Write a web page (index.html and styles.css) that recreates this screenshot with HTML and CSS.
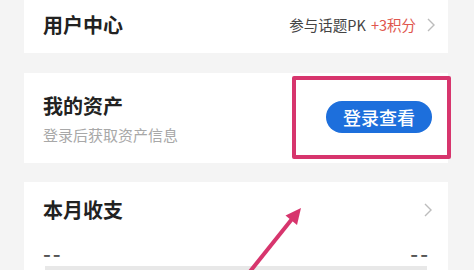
FILE: index.html
```html
<!DOCTYPE html>
<html lang="zh-CN">
<head>
<meta charset="utf-8">
<link rel="stylesheet" href="styles.css">
</head>
<body>
<div class="page">
  <section class="card card-user">
    <h2 class="title">用户中心</h2>
    <div class="extra">
      <span class="extra-text">参与话题PK</span>
      <span class="points">+3积分</span>
      <svg class="chevron" width="8" height="14" viewBox="0 0 8 14"><path d="M1 1l6 6-6 6" fill="none" stroke="#bcbcbc" stroke-width="1.4"/></svg>
    </div>
  </section>

  <section class="card card-assets">
    <div class="assets-text">
      <h2 class="title">我的资产</h2>
      <p class="sub">登录后获取资产信息</p>
    </div>
    <button class="login-btn">登录查看</button>
    <div class="highlight"></div>
  </section>

  <section class="card card-month">
    <div class="month-head">
      <h2 class="title">本月收支</h2>
      <svg class="chevron" width="8" height="14" viewBox="0 0 8 14"><path d="M1 1l6 6-6 6" fill="none" stroke="#bcbcbc" stroke-width="1.4"/></svg>
    </div>
    <div class="month-row">
      <span class="dash">--</span>
      <span class="dash">--</span>
    </div>
    <div class="bar"></div>
  </section>

  <svg class="arrow" width="474" height="270" viewBox="0 0 474 270">
    <line x1="248" y1="274" x2="292" y2="219" stroke="#d7356d" stroke-width="4" stroke-linecap="round"/>
    <polygon points="301,208 285.5,215.5 297,225" fill="#d7356d"/>
  </svg>
</div>
</body>
</html>
```

FILE: styles.css
```css
html, body {
  margin: 0;
  padding: 0;
  background: #f4f4f4;
}
body {
  width: 474px;
  height: 270px;
  overflow: hidden;
  font-family: "Noto Sans CJK SC", "Noto Sans", sans-serif;
}
.page {
  position: relative;
  padding: 0 26px 0 24px;
  height: 270px;
}
.card {
  background: #ffffff;
  position: relative;
}
.title {
  margin: 0;
  font-size: 20px;
  line-height: 24px;
  font-weight: 700;
  color: #222222;
}
.card-user {
  height: 53px;
  display: flex;
  align-items: center;
  justify-content: space-between;
  padding: 0 13px 3px 19px;
  box-sizing: border-box;
}
.extra {
  display: flex;
  align-items: center;
  font-size: 14.5px;
  line-height: 20px;
}
.extra-text {
  color: #444444;
}
.points {
  color: #e0564d;
  margin-left: 5px;
}
.extra .chevron {
  margin-left: 11px;
}
.card-assets {
  margin-top: 20px;
  height: 90px;
  display: flex;
  align-items: center;
  justify-content: space-between;
  padding: 0 16px 0 19px;
  box-sizing: border-box;
}
.assets-text {
  padding-top: 3px;
}
.sub {
  margin: 7px 0 0;
  font-size: 15px;
  line-height: 20px;
  color: #a8a8a8;
}
.login-btn {
  border: none;
  background: #1d6fdc;
  color: #ffffff;
  font-family: inherit;
  font-size: 18px;
  font-weight: 500;
  line-height: 32px;
  height: 32px;
  padding: 0 17px;
  border-radius: 16px;
  margin-top: -3px;
}
.highlight {
  position: absolute;
  left: 268px;
  top: 3px;
  width: 159px;
  height: 83px;
  box-sizing: border-box;
  border: 4px solid #d7356d;
  border-radius: 2px;
}
.card-month {
  margin-top: 19px;
  padding: 16px 16px 0 19px;
  height: 100px;
  box-sizing: border-box;
}
.month-head {
  display: flex;
  align-items: center;
  justify-content: space-between;
}
.month-row {
  margin-top: 20px;
  display: flex;
  justify-content: space-between;
  line-height: 20px;
  padding-right: 2px;
}
.dash {
  font-size: 22px;
  font-weight: 500;
  color: #555555;
  letter-spacing: 2px;
}
.bar {
  margin: 4px 5px 0 2px;
  height: 6px;
  background: #e8e8e8;
}
.arrow {
  position: absolute;
  left: 0;
  top: 0;
  pointer-events: none;
}
```
